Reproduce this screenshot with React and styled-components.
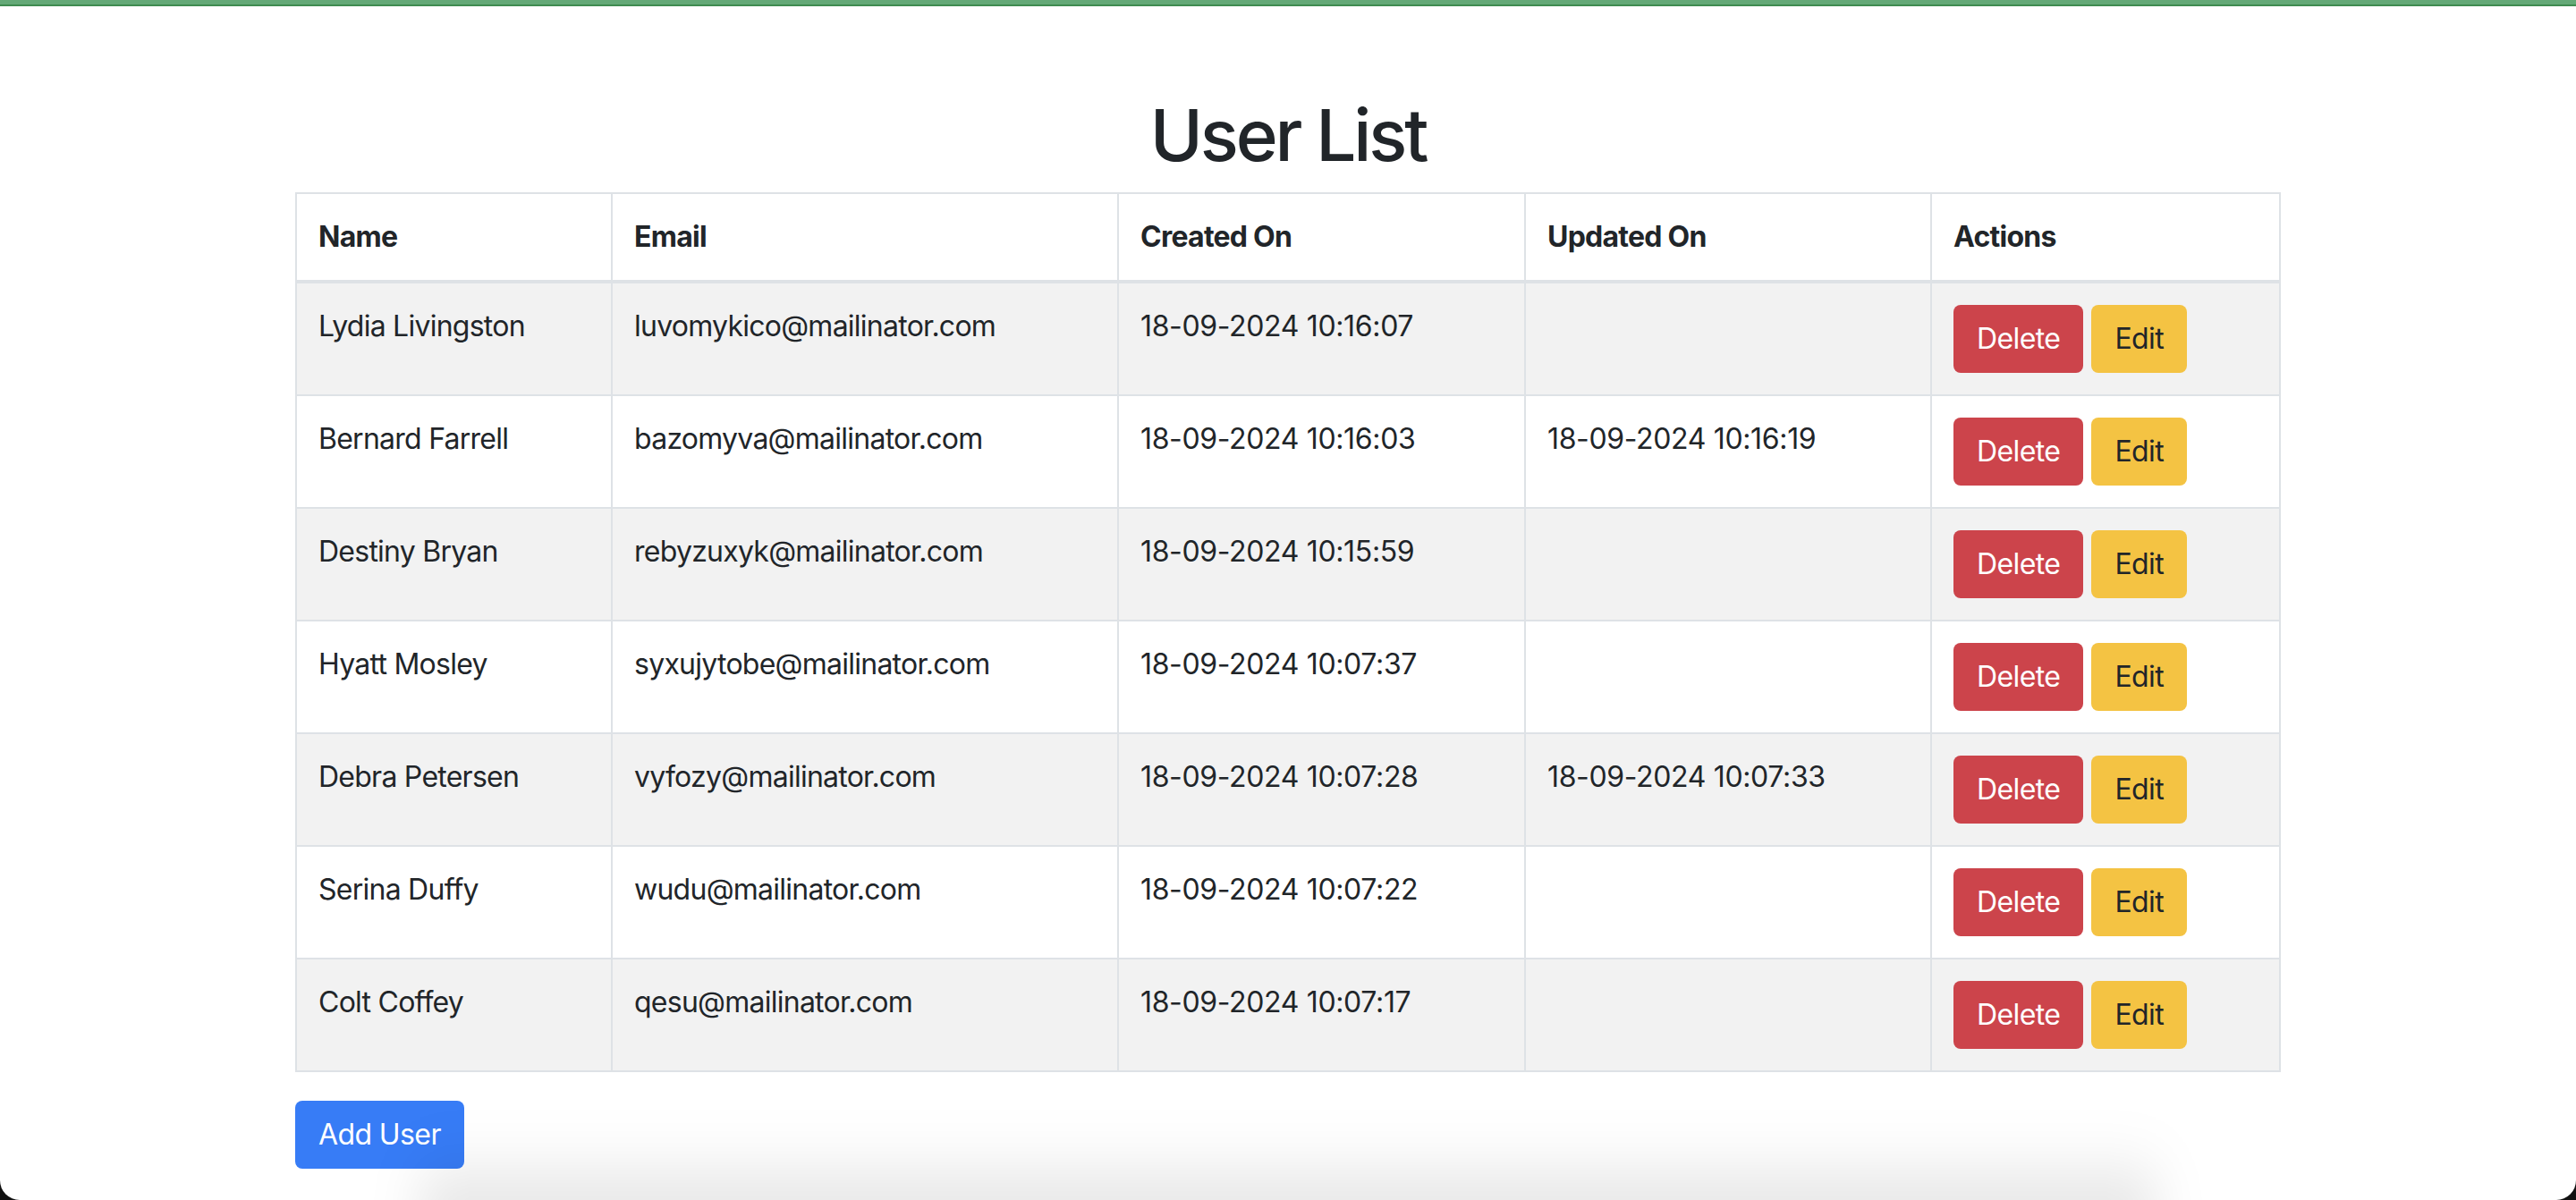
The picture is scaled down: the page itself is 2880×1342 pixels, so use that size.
import React from 'react'
import styled, { createGlobalStyle } from 'styled-components'

const GlobalStyle = createGlobalStyle`
  html, body {
    margin: 0;
    padding: 0;
    background: #111;
  }

  body {
    font-family: Inter, "Noto Sans", "Liberation Sans", sans-serif;
    color: #212529;
  }
`

const users = [
  { name: 'Lydia Livingston', email: 'luvomykico@mailinator.com', created: '18-09-2024 10:16:07', updated: '' },
  { name: 'Bernard Farrell', email: 'bazomyva@mailinator.com', created: '18-09-2024 10:16:03', updated: '18-09-2024 10:16:19' },
  { name: 'Destiny Bryan', email: 'rebyzuxyk@mailinator.com', created: '18-09-2024 10:15:59', updated: '' },
  { name: 'Hyatt Mosley', email: 'syxujytobe@mailinator.com', created: '18-09-2024 10:07:37', updated: '' },
  { name: 'Debra Petersen', email: 'vyfozy@mailinator.com', created: '18-09-2024 10:07:28', updated: '18-09-2024 10:07:33' },
  { name: 'Serina Duffy', email: 'wudu@mailinator.com', created: '18-09-2024 10:07:22', updated: '' },
  { name: 'Colt Coffey', email: 'qesu@mailinator.com', created: '18-09-2024 10:07:17', updated: '' },
]

const columns = [
  { label: 'Name', width: 353 },
  { label: 'Email', width: 566 },
  { label: 'Created On', width: 455 },
  { label: 'Updated On', width: 454 },
  { label: 'Actions', width: 390 },
]

const Window = styled.div`
  position: relative;
  min-height: 100vh;
  box-sizing: border-box;
  background: #fff;
  border-radius: 0 0 22px 22px;
  overflow: hidden;
`

const TopBar = styled.div`
  height: 5px;
  background: #64a977;
  border-bottom: 2px solid #3f8b50;
`

const Container = styled.main`
  width: 2280px;
  box-sizing: border-box;
  margin: 96px auto 0;
  padding: 0 30px;
`

const Title = styled.h1`
  margin: 0 0 16px;
  font-size: 80px;
  font-weight: 500;
  line-height: 96px;
  letter-spacing: -3.2px;
  text-align: center;
`

const Table = styled.table`
  width: 2218px;
  table-layout: fixed;
  border-collapse: collapse;
  border: 2px solid #dee2e6;
  margin-bottom: 32px;
  font-size: 32px;
  line-height: 48px;
  letter-spacing: -0.75px;

  tbody tr:nth-of-type(odd) {
    background: #f2f2f2;
  }
`

const Col = styled.col`
  width: ${p => p.$width}px;
`

const HeadCell = styled.th`
  padding: 24px;
  border: 2px solid #dee2e6;
  border-bottom-width: 4px;
  text-align: left;
  font-weight: 700;
  vertical-align: bottom;
`

const Cell = styled.td`
  padding: 24px;
  border: 2px solid #dee2e6;
  vertical-align: top;
  white-space: nowrap;
  letter-spacing: ${p => (p.$numeric ? '-0.35px' : 'inherit')};
`

const ActionGroup = styled.div`
  display: flex;
  gap: 9px;
`

const tones = {
  danger: { bg: '#cc444b', fg: '#fff' },
  warning: { bg: '#f4c343', fg: '#212529' },
  primary: { bg: '#377cf6', fg: '#fff' },
}

const Button = styled.button`
  display: inline-block;
  box-sizing: border-box;
  padding: 12px 24px;
  border: 2px solid transparent;
  border-radius: 8px;
  font-family: inherit;
  font-size: 32px;
  line-height: 48px;
  letter-spacing: -0.6px;
  background: ${p => tones[p.$tone].bg};
  color: ${p => tones[p.$tone].fg};
  cursor: pointer;
`

const DockShadow = styled.div`
  position: absolute;
  left: 470px;
  right: 470px;
  bottom: -40px;
  height: 110px;
  background: linear-gradient(to bottom, rgba(0, 0, 0, 0), rgba(0, 0, 0, 0.14));
  filter: blur(28px);
  pointer-events: none;
`

const App = () => (
  <>
    <GlobalStyle />
    <Window>
      <TopBar />
      <Container>
        <Title>User List</Title>
        <Table>
          <colgroup>
            {columns.map(c => (
              <Col key={c.label} $width={c.width} />
            ))}
          </colgroup>
          <thead>
            <tr>
              {columns.map(c => (
                <HeadCell key={c.label}>{c.label}</HeadCell>
              ))}
            </tr>
          </thead>
          <tbody>
            {users.map(u => (
              <tr key={u.email}>
                <Cell>{u.name}</Cell>
                <Cell>{u.email}</Cell>
                <Cell $numeric>{u.created}</Cell>
                <Cell $numeric>{u.updated}</Cell>
                <Cell>
                  <ActionGroup>
                    <Button $tone="danger">Delete</Button>
                    <Button $tone="warning">Edit</Button>
                  </ActionGroup>
                </Cell>
              </tr>
            ))}
          </tbody>
        </Table>
        <Button $tone="primary">Add User</Button>
      </Container>
      <DockShadow />
    </Window>
  </>
)

export default App
